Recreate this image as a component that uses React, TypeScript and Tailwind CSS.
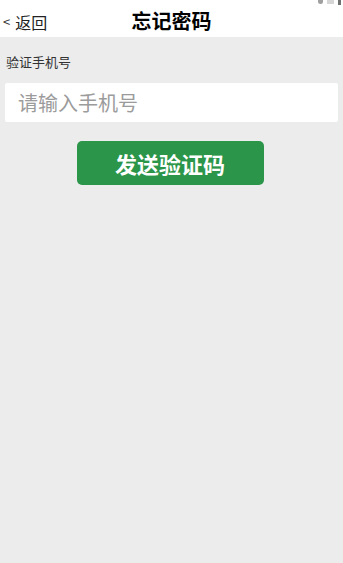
import React from "react";

export default function App() {
  const font = { fontFamily: '"Noto Sans CJK SC", "Noto Sans", sans-serif' };
  return (
    <div className="relative w-[343px] h-[563px] bg-[#ececec] overflow-hidden" style={font}>
      <header className="h-[37px] bg-white flex items-center relative">
        <div className="flex items-center pl-[3px] text-[16px] text-[#222] leading-none pt-[6px]">
          <span className="text-[13px] mr-[5px] text-[#333]">&lt;</span>
          <span>返回</span>
        </div>
        <div className="absolute left-0 right-0 top-[4px] text-center text-[20px] font-bold text-black leading-[34px]">
          忘记密码
        </div>
        {/* clipped status icons */}
        <div className="absolute top-0 right-0 flex items-start gap-[4px] pr-[2px]">
          <div className="w-[5px] h-[4px] bg-[#a0a0a0] rounded-b-[3px]" />
          <div className="w-[7px] h-[4px] bg-[#d6d6d6]" />
          <div className="w-[3px] h-[5px] bg-[#707070]" />
        </div>
      </header>
      <div className="px-[5px]">
        <div className="text-[13px] text-[#333] pl-[1px] pt-[16px] leading-[18px]">验证手机号</div>
        <div className="mt-[12px] h-[39px] bg-white rounded-[2px] flex items-center pl-[13px] text-[20px] text-[#9b9b9b]">
          请输入手机号
        </div>
        <div className="flex justify-center mt-[19px]">
          <button className="w-[187px] h-[44px] ml-[-3px] rounded-[5px] bg-[#2b9549] text-white text-[22px] font-bold flex items-center justify-center">
            发送验证码
          </button>
        </div>
      </div>
    </div>
  );
}
